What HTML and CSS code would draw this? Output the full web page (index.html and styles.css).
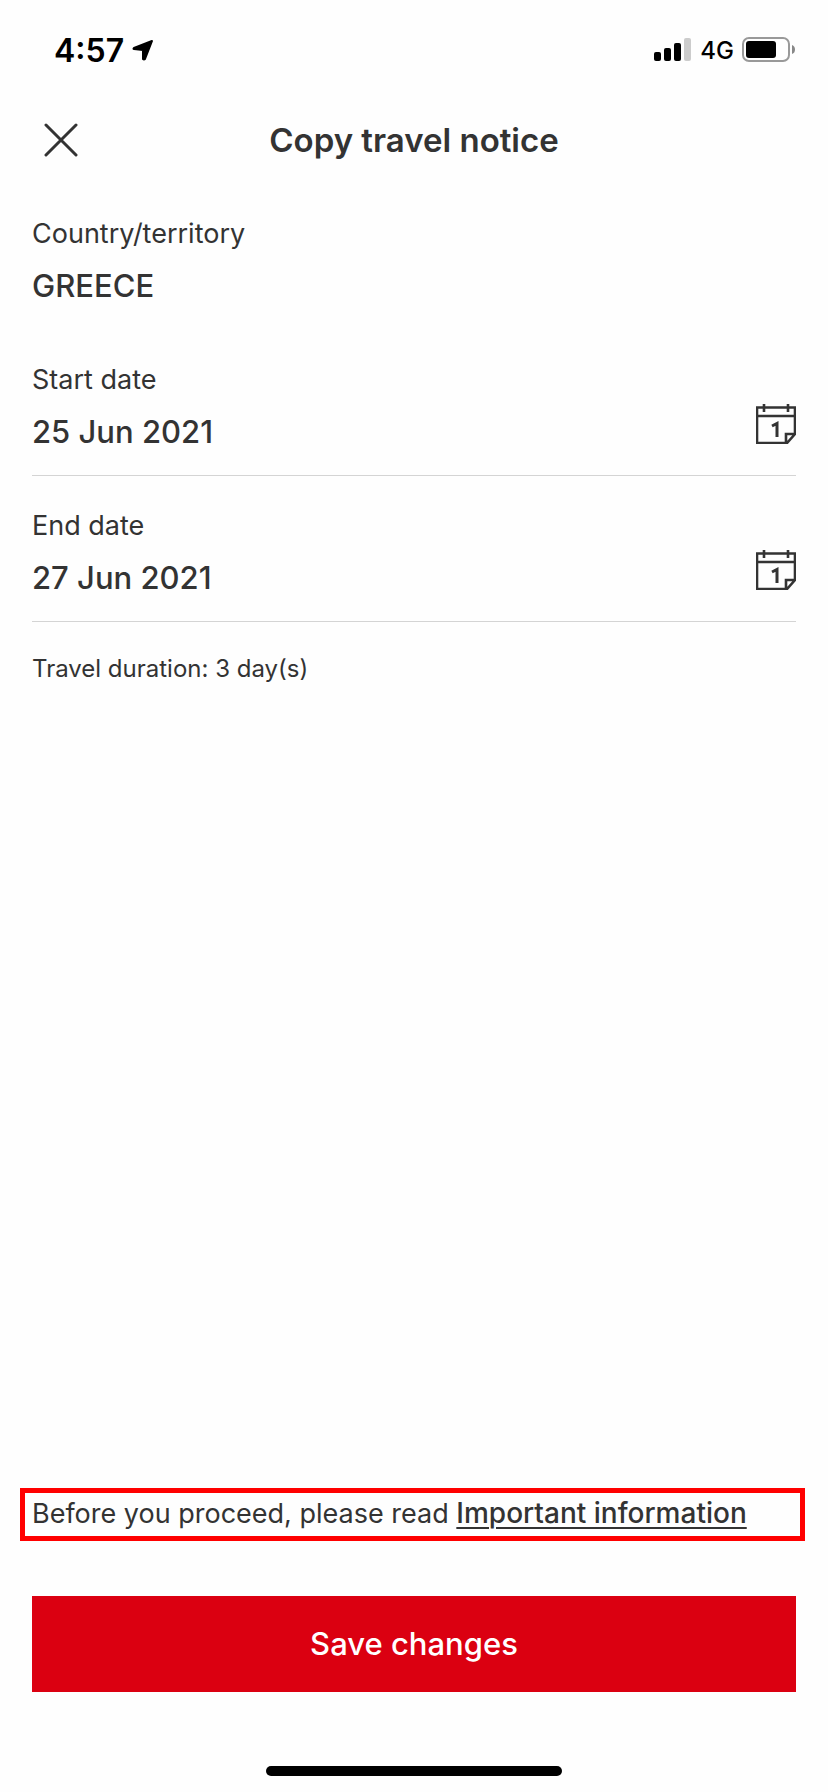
FILE: index.html
```html
<!DOCTYPE html>
<html lang="en">
<head>
    <meta charset="UTF-8">
    <meta name="viewport" content="width=device-width, initial-scale=1.0">
    <title>Copy travel notice</title>
    <link rel="stylesheet" href="styles.css">
</head>
<body>
    <div class="status-bar">
        <div class="status-left">
            <span class="time">4:57</span>
            <svg width="22" height="22" viewBox="0 0 22 22">
                <path d="M2 9 20 2 13 20Q12 21 11 20L11 11 2 10Q1 10 2 9Z" fill="#000" stroke="#000" stroke-width="2" stroke-linejoin="round"/>
            </svg>
        </div>
        <div class="status-right">
            <svg width="38" height="24" viewBox="0 0 38 24">
                <rect x="0" y="14" width="7" height="9" rx="2"/>
                <rect x="10" y="10" width="7" height="13" rx="2"/>
                <rect x="20" y="5" width="7" height="18" rx="2"/>
                <rect x="30" y="0" width="7" height="23" rx="2" fill="#ccc"/>
            </svg>
            <span class="network">4G</span>
            <svg width="54" height="26" viewBox="0 0 54 26">
                <rect x="1" y="1" width="46" height="23" rx="6" fill="none" stroke="#999" stroke-width="2"/>
                <rect x="4" y="4" width="30" height="17" rx="3"/>
                <path d="M50 8Q53 9 53 12.5T50 17Z" fill="#888"/>
            </svg>
        </div>
    </div>

    <header class="header">
        <button class="close" type="button" aria-label="Close">
            <svg width="34" height="34" viewBox="0 0 34 34">
                <path d="M2 2 32 32M32 2 2 32" fill="none" stroke="#333" stroke-width="3" stroke-linecap="round"/>
            </svg>
        </button>
        <h1>Copy travel notice</h1>
    </header>

    <form class="content">
        <div class="field">
            <label for="country">Country/territory</label>
            <output class="value" id="country">GREECE</output>
        </div>
        <div class="field date-field">
            <label for="startDate">Start date</label>
            <input class="value" type="text" id="startDate" value="25 Jun 2021" readonly>
            <button class="calendar" type="button" aria-label="Choose start date">
                <svg width="40" height="40" viewBox="0 0 40 40">
                    <path d="M1 3.5H39V30L31 39H1ZM1 12H39M8 0V8M32 0V8M30 39V30H39" fill="none" stroke="#333" stroke-width="2.6"/>
                    <path d="M16 22 21 19.5V33" fill="none" stroke="#333" stroke-width="3"/>
                </svg>
            </button>
        </div>
        <div class="field date-field">
            <label for="endDate">End date</label>
            <input class="value" type="text" id="endDate" value="27 Jun 2021" readonly>
            <button class="calendar" type="button" aria-label="Choose end date">
                <svg width="40" height="40" viewBox="0 0 40 40">
                    <path d="M1 3.5H39V30L31 39H1ZM1 12H39M8 0V8M32 0V8M30 39V30H39" fill="none" stroke="#333" stroke-width="2.6"/>
                    <path d="M16 22 21 19.5V33" fill="none" stroke="#333" stroke-width="3"/>
                </svg>
            </button>
        </div>
        <p class="duration">Travel duration: 3 day(s)</p>

        <p class="notice">Before you proceed, please read <a href="#">Important information</a></p>
        <button class="save" type="submit">Save changes</button>
    </form>

    <div class="home-indicator"></div>
</body>
</html>
```
FILE: styles.css
```css
* {
    box-sizing: border-box;
}
body {
    margin: 0;
    min-height: 100vh;
    display: flex;
    flex-direction: column;
    font-family: Inter, "Liberation Sans", sans-serif;
    color: #333;
    background-color: #fefefe;
}
button {
    padding: 0;
    border: none;
    background: none;
    font-family: inherit;
    cursor: pointer;
}
svg {
    display: block;
}
.status-bar {
    display: flex;
    justify-content: space-between;
    height: 100px;
    padding: 0 32px 0 54px;
    color: #000;
}
.status-left,
.status-right {
    display: flex;
    align-items: center;
    gap: 8px;
}
.time {
    font-size: 32px;
    font-weight: 600;
}
.network {
    font-size: 24px;
    font-weight: 500;
}
.header {
    display: grid;
    grid-template-columns: 34px 1fr 34px;
    align-items: center;
    height: 80px;
    padding: 0 44px;
}
h1 {
    margin: 0;
    font-size: 33px;
    font-weight: 600;
    text-align: center;
}
.content {
    flex: 1;
    display: flex;
    flex-direction: column;
    padding: 4px 32px 0;
}
.field {
    display: grid;
    grid-template-columns: 1fr auto;
    row-gap: 11px;
    padding: 33px 0 20px;
}
.field label {
    font-size: 27px;
    line-height: 34px;
}
.value {
    grid-column: 1;
    width: 100%;
    height: 48px;
    padding: 0;
    border: none;
    background: none;
    font-family: inherit;
    font-size: 31px;
    font-weight: 500;
    line-height: 48px;
    color: inherit;
}
.date-field {
    padding-bottom: 19px;
    border-bottom: 1px solid #d4d4d4;
}
.calendar {
    grid-column: 2;
    grid-row: 1 / 3;
    align-self: end;
    padding-bottom: 12px;
}
.duration {
    margin: 30px 0 auto;
    font-size: 24px;
    line-height: 34px;
}
.notice {
    margin: 32px -9px 55px -12px;
    padding: 3px 7px 5px;
    border: 5px solid #f00;
    font-size: 27px;
    line-height: 35px;
}
.notice a {
    color: inherit;
    font-size: 28px;
    font-weight: 500;
    text-underline-offset: 4px;
    text-decoration-thickness: 2px;
}
.save {
    height: 96px;
    padding-bottom: 2px;
    background-color: #db0011;
    color: #fff;
    font-size: 31px;
    font-weight: 500;
}
.home-indicator {
    align-self: center;
    width: 296px;
    height: 10px;
    margin: 74px 0 16px;
    border-radius: 5px;
    background-color: #000;
}
```
